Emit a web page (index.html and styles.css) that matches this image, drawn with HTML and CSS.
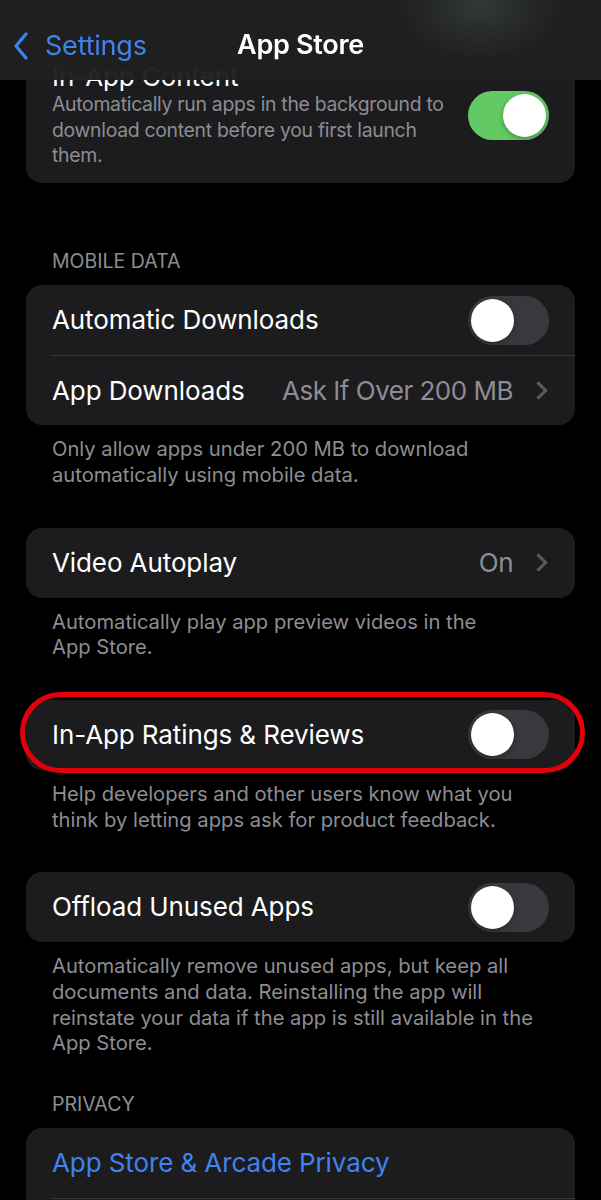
FILE: index.html
```html
<html>
	<head>
		<link rel="stylesheet" href="styles.css">
	</head>
	<body>
		<header class="navbar">
			<a class="navbar__back">
				<svg class="navbar__chevron" viewBox="0 0 16 28" width="16" height="28"><path d="M13 2 L3 14 L13 26" fill="none" stroke="currentColor" stroke-width="3.2" stroke-linecap="round" stroke-linejoin="round"/></svg>
				<span>Settings</span>
			</a>
			<h1 class="navbar__title">App Store</h1>
		</header>
		<main class="settings">
			<section class="group group--first">
				<div class="card">
					<div class="row row--tall">
						<div class="row__text">
							<div class="row__label">In-App Content</div>
							<div class="row__desc">Automatically run apps in the background to download content before you first launch them.</div>
						</div>
						<span class="switch switch--on"></span>
					</div>
				</div>
			</section>

			<section class="group">
				<h2 class="group__header">Mobile Data</h2>
				<div class="card">
					<div class="row">
						<span class="row__label">Automatic Downloads</span>
						<span class="switch"></span>
					</div>
					<div class="row">
						<span class="row__label">App Downloads</span>
						<span class="row__value">Ask If Over 200 MB</span>
						<span class="row__chevron"></span>
					</div>
				</div>
				<p class="group__footer">Only allow apps under 200 MB to download automatically using mobile data.</p>
			</section>

			<section class="group">
				<div class="card">
					<div class="row">
						<span class="row__label">Video Autoplay</span>
						<span class="row__value">On</span>
						<span class="row__chevron"></span>
					</div>
				</div>
				<p class="group__footer">Automatically play app preview videos in the App&nbsp;Store.</p>
			</section>

			<section class="group">
				<div class="card card--highlight">
					<div class="row">
						<span class="row__label">In-App Ratings &amp; Reviews</span>
						<span class="switch"></span>
					</div>
				</div>
				<p class="group__footer">Help developers and other users know what you think by letting apps ask for product feedback.</p>
			</section>

			<section class="group">
				<div class="card">
					<div class="row">
						<span class="row__label">Offload Unused Apps</span>
						<span class="switch"></span>
					</div>
				</div>
				<p class="group__footer">Automatically remove unused apps, but keep all documents and data. Reinstalling the app will reinstate your data if the app is still available in the App&nbsp;Store.</p>
			</section>

			<section class="group group--header">
				<h2 class="group__header">Privacy</h2>
				<div class="card">
					<div class="row">
						<span class="row__label row__label--link">App Store &amp; Arcade Privacy</span>
					</div>
					<div class="row"></div>
				</div>
			</section>
		</main>
	</body>
</html>
```

FILE: styles.css
```css
body {
	margin: 0;
	background: #000;
	color: #fff;
	font-family: Inter, "Noto Sans", sans-serif;
	-webkit-font-smoothing: antialiased;
}
.navbar {
	position: fixed;
	top: 0;
	left: 0;
	right: 0;
	height: 80px;
	z-index: 2;
	display: flex;
	align-items: center;
	justify-content: center;
	background: radial-gradient(ellipse 80px 55px at 480px 5px, rgba(52,60,54,0.9), rgba(52,60,54,0) 100%), rgba(32,32,32,0.97);
	padding-top: 8px;
	box-sizing: border-box;
}
.navbar__back {
	position: absolute;
	left: 13px;
	top: 29px;
	display: flex;
	align-items: center;
	gap: 16px;
	color: #3f83ee;
	font-size: 27px;
	letter-spacing: -0.2px;
}
.navbar__chevron {
	display: block;
}
.navbar__title {
	margin: 0;
	font-size: 27px;
	font-weight: 600;
	letter-spacing: -0.3px;
}
.settings {
	padding: 48px 26px 0;
}
.group {
	margin-bottom: 40px;
}
.group--first {
	margin-bottom: 66px;
}
.group--header {
	margin-top: -4px;
}
.group__header {
	margin: 0 0 12px 26px;
	font-size: 19.5px;
	font-weight: 400;
	line-height: 24px;
	text-transform: uppercase;
	color: #8d8d93;
}
.group__footer {
	margin: 0;
	padding: 11px 26px 0;
	font-size: 20.2px;
	line-height: 25.7px;
	color: #8d8d93;
}
.card {
	background: #1c1c1e;
	border-radius: 16px;
	position: relative;
}
.card--highlight::after {
	content: "";
	position: absolute;
	left: -6px;
	right: -10px;
	top: -8px;
	bottom: -3px;
	border: 5px solid #e3000b;
	border-radius: 42px;
	pointer-events: none;
}
.row {
	height: 70px;
	display: flex;
	align-items: center;
	margin-left: 26px;
	padding-right: 26px;
	position: relative;
}
.row + .row {
	border-top: 1px solid #38383a;
	height: 69px;
}
.row--tall {
	height: auto;
	padding-top: 14px;
	padding-bottom: 14px;
}
.row__text {
	flex: 1;
	padding-right: 6px;
}
.row__label {
	flex: 1;
	font-size: 26px;
	letter-spacing: -0.1px;
	line-height: 30px;
}
.row__label--link {
	color: #3f83ee;
}
.row__desc {
	font-size: 19.4px;
	letter-spacing: -0.3px;
	line-height: 25.7px;
	color: #8d8d93;
}
.row__value {
	font-size: 26px;
	color: #8d8d93;
	letter-spacing: -0.5px;
}
.row__chevron {
	width: 10px;
	height: 10px;
	margin-left: 19px;
	margin-right: 4px;
	border-top: 3px solid #5a5a5f;
	border-right: 3px solid #5a5a5f;
	transform: rotate(45deg);
}
.switch {
	flex: none;
	width: 81px;
	height: 49px;
	border-radius: 25px;
	background: #39393d;
	position: relative;
}
.switch::before {
	content: "";
	position: absolute;
	top: 3px;
	left: 3px;
	width: 43px;
	height: 43px;
	border-radius: 50%;
	background: #fff;
	box-shadow: 0 2px 5px rgba(0,0,0,0.3);
}
.switch--on {
	background: #63c964;
}
.switch--on::before {
	left: auto;
	right: 3px;
}
```
